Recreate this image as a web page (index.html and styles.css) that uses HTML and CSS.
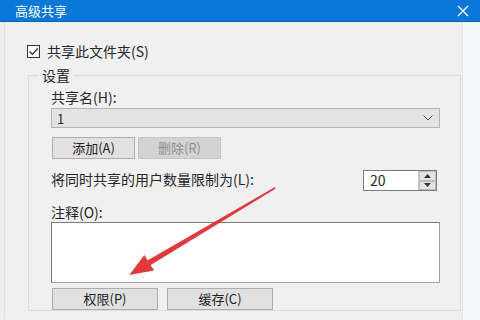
FILE: index.html
```html
<!DOCTYPE html>
<html lang="zh-CN">
<head>
    <meta charset="UTF-8">
    <title>高级共享</title>
    <link rel="stylesheet" href="styles.css">
</head>
<body>
    <div class="window">
        <div class="titlebar">
            <span class="title">高级共享</span>
            <svg class="close" width="12" height="12" viewBox="0 0 12 12">
                <path d="M1 1 L11 11 M11 1 L1 11" stroke="#fff" stroke-width="1.3" fill="none"/>
            </svg>
        </div>

        <div class="content">
            <label class="share-row">
                <span class="checkbox">
                    <svg width="11" height="11" viewBox="0 0 11 11">
                        <path d="M1.5 5.5 L4.3 8.3 L9.8 2.5" stroke="#222" stroke-width="1.2" fill="none"/>
                    </svg>
                </span>
                共享此文件夹(S)
            </label>

            <fieldset class="group">
                <legend>设置</legend>

                <div class="field-label">共享名(H):</div>
                <div class="combo">
                    <span>1</span>
                    <svg width="10" height="6" viewBox="0 0 10 6">
                        <path d="M0.5 0.5 L5 5 L9.5 0.5" stroke="#555" stroke-width="1" fill="none"/>
                    </svg>
                </div>

                <div class="btn-row small">
                    <button class="btn">添加(A)</button>
                    <button class="btn" disabled>删除(R)</button>
                </div>

                <div class="limit-row">
                    <span>将同时共享的用户数量限制为(L):</span>
                    <div class="spinner">
                        <span class="spin-value">20</span>
                        <div class="spin-btns">
                            <div class="spin-btn">
                                <svg width="7" height="4" viewBox="0 0 7 4"><path d="M0 4 L3.5 0 L7 4 Z" fill="#333"/></svg>
                            </div>
                            <div class="spin-btn">
                                <svg width="7" height="4" viewBox="0 0 7 4"><path d="M0 0 L3.5 4 L7 0 Z" fill="#333"/></svg>
                            </div>
                        </div>
                    </div>
                </div>

                <div class="field-label comment-label">注释(O):</div>
                <div class="comment-box"></div>

                <div class="btn-row wide">
                    <button class="btn">权限(P)</button>
                    <button class="btn">缓存(C)</button>
                </div>
            </fieldset>
        </div>
    </div>

    <svg class="arrow" width="480" height="320" viewBox="0 0 480 320">
        <polygon points="275.3,188.4 150.2,264.9 153.5,270.2 130,274.5 144.3,255.4 147.6,260.7 274.7,187.6" fill="#e23a3c" stroke="#c92a2e" stroke-width="0.6" stroke-linejoin="round"/>
    </svg>
</body>
</html>
```

FILE: styles.css
```css
body {
    margin: 0;
    width: 480px;
    height: 320px;
    overflow: hidden;
    background: #f7f8fa;
    font-family: "Noto Sans CJK SC", "DejaVu Sans", sans-serif;
    font-size: 14px;
    color: #262626;
    position: relative;
}
.window {
    width: 462px;
    height: 320px;
    background: #f0f0f0;
    border-right: 1px solid #e2e5ea;
}
.titlebar {
    height: 22px;
    background: #0a78d7;
    border-bottom: 1px solid #0863b4;
    display: flex;
    align-items: center;
    justify-content: space-between;
    padding: 0 11px 0 15px;
    color: white;
    width: 480px;
    box-sizing: border-box;
}
.title {
    font-size: 13px;
    line-height: 22px;
}
.content {
    border-left: 1px solid #dde3ea;
    margin-left: 4px;
    height: 297px;
}
.share-row {
    display: flex;
    align-items: center;
    height: 16px;
    line-height: 16px;
    padding: 21px 0 0 22px;
}
.checkbox {
    width: 11px;
    height: 11px;
    border: 1px solid #333;
    background: white;
    margin-right: 7px;
    display: flex;
}
.group {
    margin: 8px 0 0 23px;
    padding: 0 20px 0 22px;
    width: 433px;
    box-sizing: border-box;
    border: 1px solid #dcdcdc;
    min-width: 0;
}
.group legend {
    padding: 0 4px;
    margin-left: -13px;
    line-height: 16px;
}
.field-label {
    line-height: 16px;
    margin-top: 6px;
}
.combo {
    margin-top: 3px;
    height: 20px;
    box-sizing: border-box;
    background: #e3e3e3;
    border: 1px solid #b4b4b4;
    display: flex;
    align-items: center;
    justify-content: space-between;
    padding: 0 6px 0 5px;
    font-size: 13px;
}
.btn-row {
    display: flex;
    margin-left: 1px;
}
.btn-row.small {
    margin-top: 9px;
    gap: 3px;
}
.btn-row.wide {
    margin-top: 5px;
    gap: 9px;
}
.btn {
    height: 22px;
    font-family: inherit;
    font-size: 13px;
    color: #222;
    background: #e1e1e1;
    border: 1px solid #adadad;
    padding: 0;
    line-height: 20px;
}
.small .btn {
    width: 83px;
}
.wide .btn {
    width: 106px;
}
.btn:disabled {
    background: #d3d3d3;
    border-color: #c4c4c4;
    color: #8e8e8e;
}
.limit-row {
    margin-top: 10px;
    display: flex;
    align-items: center;
    justify-content: space-between;
    height: 20px;
    line-height: 16px;
}
.spinner {
    width: 74px;
    height: 21px;
    box-sizing: border-box;
    margin-right: 3px;
    margin-top: 3px;
    border: 1px solid #7a7a7a;
    background: white;
    display: flex;
}
.spin-value {
    flex: 1;
    padding-left: 6px;
    font-size: 14px;
    line-height: 19px;
}
.spin-btns {
    width: 17px;
    display: flex;
    flex-direction: column;
    background: #f0f0f0;
    border-left: 1px solid #c8c8c8;
}
.spin-btn {
    flex: 1;
    display: flex;
    align-items: center;
    justify-content: center;
    background: #e4e4e4;
    border: 1px solid #bdbdbd;
}
.comment-label {
    margin-top: 15px;
}
.comment-box {
    margin-top: 2px;
    height: 61px;
    box-sizing: border-box;
    background: white;
    border: 1px solid #a0a0a0;
    border-top-color: #7a7a7a;
    border-left-color: #7a7a7a;
}
.arrow {
    position: absolute;
    left: 0;
    top: 0;
    pointer-events: none;
}
```
